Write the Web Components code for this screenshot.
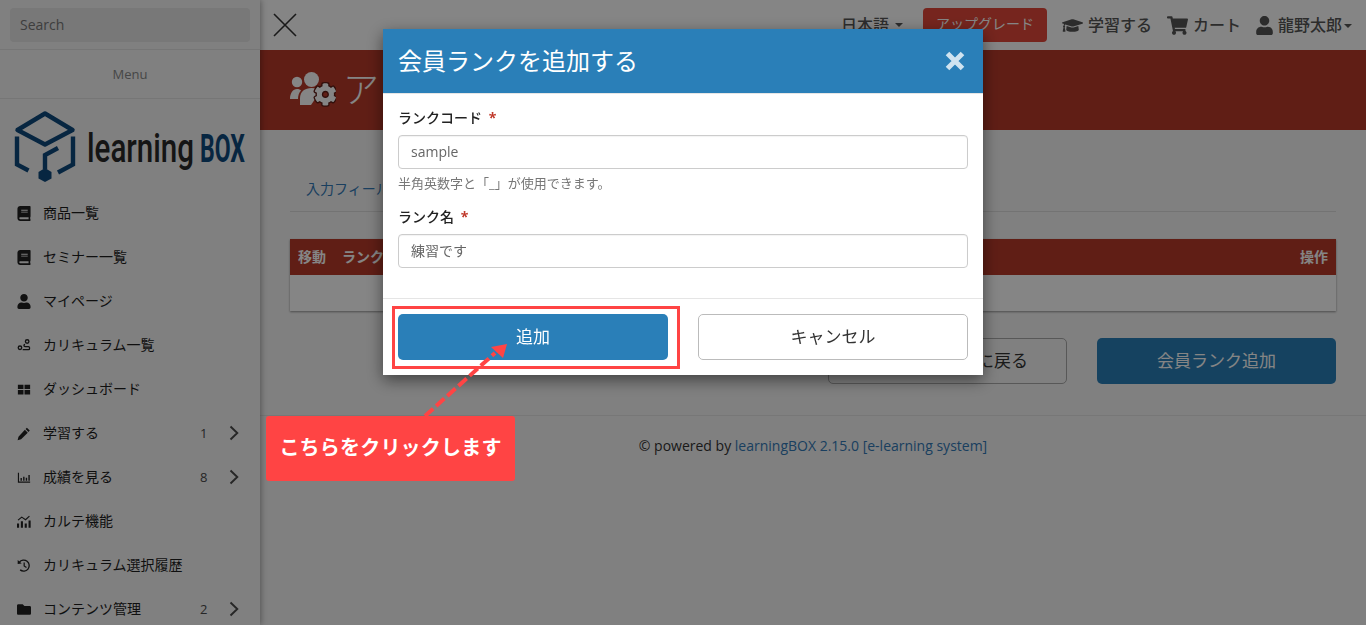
<!DOCTYPE html>
<html lang="ja">
<head>
<meta charset="utf-8">
<title>learningBOX</title>
<style>
  html, body { margin: 0; height: 625px; overflow: hidden; }
  body {
    font: 14px/1.43 "Open Sans", "Noto Sans CJK JP", sans-serif;
    color: #333;
    background: #f5f5f5;
  }
</style>
</head>
<body>

<svg width="0" height="0" style="position:absolute">
  <defs>
    <symbol id="i-book" viewBox="0 0 448 512"><path d="M448 360V24c0-13.3-10.7-24-24-24H96C43 0 0 43 0 96v320c0 53 43 96 96 96h328c13.3 0 24-10.7 24-24v-16c0-7.5-3.5-14.3-8.9-18.7-4.2-15.4-4.2-59.3 0-74.7 5.4-4.3 8.9-11.1 8.9-18.6zM128 134c0-3.3 2.7-6 6-6h212c3.3 0 6 2.7 6 6v20c0 3.3-2.7 6-6 6H134c-3.3 0-6-2.7-6-6v-20zm0 64c0-3.3 2.7-6 6-6h212c3.3 0 6 2.7 6 6v20c0 3.3-2.7 6-6 6H134c-3.3 0-6-2.7-6-6v-20zm253.4 250H96c-17.7 0-32-14.3-32-32 0-17.6 14.4-32 32-32h285.4c-1.9 17.1-1.9 46.9 0 64z"/></symbol>
  </defs>
</svg>

<lb-app></lb-app>

<script>
// shared icon paths, 'vb' is the viewBox
const ICONS = {
  book: { vb: '0 0 448 512', d: 'M448 360V24c0-13.3-10.7-24-24-24H96C43 0 0 43 0 96v320c0 53 43 96 96 96h328c13.3 0 24-10.7 24-24v-16c0-7.5-3.5-14.3-8.9-18.7-4.2-15.4-4.2-59.3 0-74.7 5.4-4.3 8.9-11.1 8.9-18.6zM128 134c0-3.3 2.7-6 6-6h212c3.3 0 6 2.7 6 6v20c0 3.3-2.7 6-6 6H134c-3.3 0-6-2.7-6-6v-20zm0 64c0-3.3 2.7-6 6-6h212c3.3 0 6 2.7 6 6v20c0 3.3-2.7 6-6 6H134c-3.3 0-6-2.7-6-6v-20zm253.4 250H96c-17.7 0-32-14.3-32-32 0-17.6 14.4-32 32-32h285.4c-1.9 17.1-1.9 46.9 0 64z' },
  user: { vb: '0 0 448 512', d: 'M224 256c70.7 0 128-57.3 128-128S294.7 0 224 0 96 57.3 96 128s57.3 128 128 128zm89.6 32h-16.7c-22.2 10.2-46.9 16-72.9 16s-50.6-5.8-72.9-16h-16.7C60.2 288 0 348.2 0 422.4V464c0 26.5 21.5 48 48 48h352c26.5 0 48-21.5 48-48v-41.6c0-74.2-60.2-134.4-134.4-134.4z' },
  folder: { vb: '0 0 512 512', d: 'M464 128H272l-64-64H48C21.49 64 0 85.49 0 112v288c0 26.51 21.49 48 48 48h416c26.51 0 48-21.51 48-48V176c0-26.51-21.49-48-48-48z' },
  grid: { vb: '0 0 16 16', d: 'M1 2.5h6.4v5H1zM8.6 2.5H15v5H8.6zM1 8.7h6.4v5H1zM8.6 8.7H15v5H8.6z' },
  pencil: { vb: '0 0 16 16', d: 'M11.3 1.4l3.3 3.3-1.5 1.5-3.3-3.3zM9 3.7L12.3 7l-7.6 7.6-4 1 1-4z' },
  chart: { vb: '0 0 16 16', d: 'M1 2.5h1.3v10.2H15V14H1zM4 8.5h1.6v3.2H4zM7 7h1.6v4.7H7zM10 8.3h1.6v3.4H10zM13 5h1.6v6.7H13z' },
  route: { vb: '0 0 16 16', html: '<circle cx="3.4" cy="10.6" r="2" fill="none" stroke="currentColor" stroke-width="1.5"/><circle cx="11.6" cy="3.4" r="2" fill="none" stroke="currentColor" stroke-width="1.5"/><path d="M6.5 12.8h6.6c1.7 0 1.7-3.6 0-3.6H9.2c-1.7 0-1.7-2.2 0-2.4" fill="none" stroke="currentColor" stroke-width="1.5"/>' },
  analytics: { vb: '0 0 16 16', html: '<path d="M0 10.4h2.4V15H0zM4.4 7.8h2.4V15H4.4zM8.8 10.2h2.4V15H8.8zM13.2 6.8h2.4V15h-2.4z"/><path d="M1.2 6.5L5.4 3l4.4 3L14.2 1.8" fill="none" stroke="currentColor" stroke-width="1.3"/>' },
  history: { vb: '0 0 16 16', html: '<path d="M2.6 4.4A6.3 6.3 0 1 1 3.6 13" fill="none" stroke="currentColor" stroke-width="1.5"/><path d="M.8 1.8l4.6 4-4.6.6z"/><path d="M8.2 4.6v4l2.6 1.6" fill="none" stroke="currentColor" stroke-width="1.4"/>' },
  cart: { vb: '0 0 576 512', d: 'M528.12 301.319l47.273-208C578.806 78.301 567.391 64 551.99 64H159.208l-9.166-44.81C147.758 8.021 137.93 0 126.529 0H24C10.745 0 0 10.745 0 24v16c0 13.255 10.745 24 24 24h69.883l70.248 343.435C147.325 417.1 136 435.222 136 456c0 30.928 25.072 56 56 56s56-25.072 56-56c0-15.674-6.447-29.835-16.824-40h209.647C430.447 426.165 424 440.326 424 456c0 30.928 25.072 56 56 56s56-25.072 56-56c0-22.172-12.888-41.332-31.579-50.405l5.517-24.276c3.413-15.018-8.002-29.319-23.403-29.319H218.117l-6.545-32h293.145c11.206 0 20.92-7.754 23.403-18.681z' },
  cap: { vb: '0 0 640 512', d: 'M622.34 153.2L343.4 67.5c-15.2-4.67-31.6-4.67-46.79 0L17.66 153.2c-23.54 7.23-23.54 38.36 0 45.59l48.63 14.94c-10.67 13.19-17.23 29.28-17.88 46.9C38.78 266.15 32 276.11 32 288c0 10.78 5.68 19.85 13.86 25.65L20.33 428.53C18.11 438.52 25.71 448 35.94 448h56.11c10.24 0 17.84-9.48 15.62-19.47L82.14 313.65C90.32 307.85 96 298.78 96 288c0-11.57-6.47-21.25-15.66-26.87.76-15.02 8.44-28.3 20.69-36.72L296.6 285.5c9.06 2.78 26.44 6.25 46.79 0l278.95-85.7c23.55-7.24 23.55-38.36 0-45.6zM352.79 315.09c-28.53 8.76-52.84 3.92-65.59 0l-145.02-44.55L128 384c0 35.35 85.96 64 192 64s192-28.65 192-64l-14.18-113.47-145.03 44.56z' },
};

function icon(name, w, h) {
  const ic = ICONS[name];
  const inner = ic.html || `<path d="${ic.d}"/>`;
  return `<svg width="${w}" height="${h}" viewBox="${ic.vb}" fill="currentColor" aria-hidden="true">${inner}</svg>`;
}

class SideItem extends HTMLElement {
  connectedCallback() {
    const badge = this.getAttribute('badge');
    this.attachShadow({ mode: 'open' }).innerHTML = `
      <style>
        :host { display: flex; align-items: center; height: 44px; padding-left: 17px; padding-right: 21px; color: #222; }
        .ic { width: 14px; height: 16px; margin-right: 12px; display: flex; align-items: center; justify-content: center; flex: none; }
        .label { flex: 1; font-size: 14px; white-space: nowrap; color: #1e1e1e; }
        .badge { font-size: 13px; color: #4a4a4a; width: 29px; }
        .chev { display: block; }
      </style>
      <span class="ic">${icon(this.getAttribute('icon'), 15, 15)}</span>
      <span class="label"><slot></slot></span>
      ${badge ? `<span class="badge">${badge}</span>
        <svg class="chev" width="10" height="16" viewBox="0 0 10 16"><path d="M1.5 1.5L8.3 8l-6.8 6.5" fill="none" stroke="#4a4a4a" stroke-width="1.9"/></svg>` : ''}
    `;
  }
}
customElements.define('side-item', SideItem);

class LbLogo extends HTMLElement {
  constructor() {
    super();
    this.attachShadow({ mode: 'open' }).innerHTML = `
      <style>:host { display: block; height: 92px; } svg { display: block; }</style>
      <svg width="260" height="92" viewBox="0 0 260 92">
        <g fill="none" stroke="#0f4a7d" stroke-width="4.4" stroke-linejoin="miter">
          <path d="M45 14.5L72.5 31 45 45.5 17.5 31z" stroke-linejoin="round"/>
          <path d="M17 37.5v28l11.5 6"/>
          <path d="M73 37.5v28L58 73.5"/>
          <path d="M58 49L45 56v14"/>
        </g>
        <path d="M45 69l6.5 4v6.5L45 83l-6.5-3.500V73z" fill="#0f4a7d"/>
        <text x="87" y="63" font-family="Roboto, sans-serif" font-weight="500" font-size="40" fill="#2a2a2a" textLength="107" lengthAdjust="spacingAndGlyphs">learning</text>
        <text x="200" y="63" font-family="Roboto, sans-serif" font-weight="700" font-size="38" fill="#0f4a7d" textLength="45" lengthAdjust="spacingAndGlyphs">BOX</text>
      </svg>`;
  }
}
customElements.define('lb-logo', LbLogo);

class LbSidebar extends HTMLElement {
  constructor() {
    super();
    this.attachShadow({ mode: 'open' }).innerHTML = `
      <style>
        :host { display: block; width: 260px; flex: none; height: 625px; overflow: hidden; position: relative; z-index: 2;
                background: #f5f5f5; box-shadow: 1px 0 6px rgba(0,0,0,.35); }
        .search { height: 50px; box-sizing: border-box; padding: 8px 10px; border-bottom: 1px solid #e2e2e2; }
        .search div { height: 34px; background: #e6e6e6; border-radius: 4px; padding: 0 10px; line-height: 34px; font-size: 14px; color: #777; }
        .menu { height: 49px; box-sizing: border-box; border-bottom: 1px solid #e2e2e2; text-align: center; line-height: 48px; font-size: 13px; color: #888; }
      </style>
      <div class="search"><div>Search</div></div>
      <div class="menu">Menu</div>
      <lb-logo></lb-logo>
      <side-item icon="book">商品一覧</side-item>
      <side-item icon="book">セミナー一覧</side-item>
      <side-item icon="user">マイページ</side-item>
      <side-item icon="route">カリキュラム一覧</side-item>
      <side-item icon="grid">ダッシュボード</side-item>
      <side-item icon="pencil" badge="1">学習する</side-item>
      <side-item icon="chart" badge="8">成績を見る</side-item>
      <side-item icon="analytics">カルテ機能</side-item>
      <side-item icon="history">カリキュラム選択履歴</side-item>
      <side-item icon="folder" badge="2">コンテンツ管理</side-item>
    `;
  }
}
customElements.define('lb-sidebar', LbSidebar);

class LbTopbar extends HTMLElement {
  constructor() {
    super();
    this.attachShadow({ mode: 'open' }).innerHTML = `
      <style>
        :host { display: flex; align-items: center; height: 50px; background: #fff; padding: 0 14px 0 13px; color: #555; font-size: 16px; font-weight: 500; }
        .burger { margin-right: auto; display: block; }
        .nav { display: flex; align-items: center; white-space: nowrap; }
        .caret { width: 0; height: 0; border: 4px solid transparent; border-top-color: #555; border-bottom: 0; display: inline-block; }
        .lang { margin-right: 20px; display: flex; align-items: center; gap: 6px; }
        .up { height: 34px; width: 124px; box-sizing: border-box; border-radius: 4px; background: #e2483a; color: #fff; font-size: 14px; font-weight: 400; text-align: center; line-height: 32px; margin-right: 15px; }
        .nav svg { display: block; margin-right: 5px; }
        .lnk { display: flex; align-items: center; margin-right: 15px; }
        .me { display: flex; align-items: center; }
        .me .caret { margin-left: 2px; margin-top: 2px; }
      </style>
      <svg class="burger" width="24" height="24" viewBox="0 0 24 24"><path d="M1 1l22 22M23 1L1 23" stroke="#333" stroke-width="1.6" fill="none"/></svg>
      <div class="nav">
        <span class="lang">日本語 <span class="caret"></span></span>
        <span class="up">アップグレード</span>
        <span class="lnk">${icon('cap', 21, 17)}学習する</span>
        <span class="lnk">${icon('cart', 21, 19)}カート</span>
        <span class="me">${icon('user', 17, 19)}龍野太郎<span class="caret"></span></span>
      </div>
    `;
  }
}
customElements.define('lb-topbar', LbTopbar);

class LbPage extends HTMLElement {
  constructor() {
    super();
    this.attachShadow({ mode: 'open' }).innerHTML = `
      <style>
        :host { display: block; flex: 1; min-width: 0; background: #f5f5f5; }
        .band { height: 80px; background: #b83a2a; color: #fff; display: flex; align-items: center; padding-left: 29px; font-size: 36px; font-weight: 300; }
        .band svg { margin-right: 7px; display: block; }
        .body { padding: 0 30px; }
        .tabs { margin-top: 36px; height: 45px; box-sizing: content-box; border-bottom: 1px solid #ddd; padding-left: 16px; line-height: 46px; font-size: 14px; color: #337ab7; }
        .table { margin-top: 27px; box-shadow: 0 1px 2px rgba(0,0,0,.4); background: #fff; }
        .head { height: 36px; background: #b83a2a; color: #fff; display: flex; align-items: center; padding: 0 8px; font-size: 14px; font-weight: 700; }
        .head span + span { margin-left: 16px; }
        .head .ops { margin-left: auto; }
        .row { height: 36px; }
        .actions { margin-top: 27px; display: flex; justify-content: flex-end; gap: 30px; }
        .btn { width: 239px; height: 46px; box-sizing: border-box; border-radius: 5px; font-size: 17px; display: flex; align-items: center; justify-content: center; }
        .back { background: #f5f5f5; border: 1px solid #aaa; justify-content: flex-end; padding-right: 38px; color: #333; }
        .add { background: #2a7fb8; color: #fff; }
        .foot { margin-top: 31px; border-top: 1px solid #e4e4e4; text-align: center; padding-top: 20px; font-size: 14px; color: #333; }
        .foot a { color: #337ab7; text-decoration: none; }
      </style>
      <lb-topbar></lb-topbar>
      <div class="band">
        <svg width="47" height="36" viewBox="0 0 47 36" fill="#fff">
          <circle cx="8" cy="10" r="5.200"/>
          <path d="M1 27c0-6 3-10 7-10 2 0 3 .5 4 1.500-2 2-3 5-3 8.500z"/>
          <circle cx="22.500" cy="7.500" r="7.500"/>
          <path d="M11 33v-7c0-6.500 5-10 11.500-10 4 0 7 1 9 3L22 33z"/>
          <g transform="translate(25 11) scale(.0445)"><path stroke="#5f1d15" stroke-width="60" paint-order="stroke" d="M487.4 315.7l-42.6-24.6c4.3-23.2 4.3-47 0-70.200l42.6-24.600c4.900-2.800 7.100-8.600 5.500-14-11.100-35.600-30-67.800-54.700-94.600-3.800-4.100-10-5.100-14.800-2.300L380.800 110c-17.900-15.400-38.500-27.300-60.800-35.100V25.800c0-5.600-3.900-10.500-9.400-11.700-36.700-8.200-74.300-7.800-109.200 0-5.500 1.200-9.400 6.100-9.400 11.700V75c-22.200 7.900-42.800 19.800-60.800 35.100L88.700 85.500c-4.900-2.800-11-1.900-14.800 2.300-24.700 26.700-43.600 58.900-54.700 94.600-1.700 5.400.6 11.200 5.500 14L67.300 221c-4.300 23.200-4.300 47 0 70.200l-42.600 24.600c-4.900 2.800-7.100 8.600-5.500 14 11.100 35.600 30 67.800 54.700 94.600 3.800 4.100 10 5.100 14.800 2.300l42.600-24.600c17.900 15.400 38.500 27.300 60.800 35.100v49.200c0 5.600 3.900 10.500 9.400 11.700 36.700 8.200 74.300 7.800 109.200 0 5.500-1.200 9.400-6.100 9.400-11.700v-49.200c22.200-7.900 42.800-19.800 60.800-35.100l42.600 24.600c4.900 2.800 11 1.900 14.800-2.300 24.700-26.700 43.600-58.900 54.700-94.600 1.500-5.500-.7-11.300-5.600-14.100zM256 336c-44.100 0-80-35.900-80-80s35.900-80 80-80 80 35.900 80 80-35.900 80-80 80z"/></g>
        </svg>
        <span>アカ</span>
      </div>
      <div class="body">
        <div class="tabs">入力フィールド</div>
        <div class="table">
          <div class="head"><span>移動</span><span>ランク</span><span class="ops">操作</span></div>
          <div class="row"></div>
        </div>
        <div class="actions">
          <div class="btn back">に戻る</div>
          <div class="btn add">会員ランク追加</div>
        </div>
      </div>
      <div class="foot">© powered by <a>learningBOX 2.15.0 [e-learning system]</a></div>
    `;
  }
}
customElements.define('lb-page', LbPage);

class FormField extends HTMLElement {
  connectedCallback() {
    const help = this.getAttribute('help');
    this.attachShadow({ mode: 'open' }).innerHTML = `
      <style>
        :host { display: block; }
        label { display: block; font-size: 14px; font-weight: 500; color: #222; line-height: 20px; margin-bottom: 7px; }
        label b { color: #c0392b; font-weight: 700; margin-left: 3px; }
        .input { height: 34px; box-sizing: border-box; border: 1px solid #ccc; border-radius: 4px; padding: 0 12px; line-height: 32px; font-size: 14px; color: #666; box-shadow: inset 0 1px 1px rgba(0,0,0,.05); }
        .help { font-size: 13px; color: #777; line-height: 20px; margin-top: 4px; }
      </style>
      <label>${this.getAttribute('label')} <b>*</b></label>
      <div class="input"><slot></slot></div>
      ${help ? `<div class="help">${help}</div>` : ''}
    `;
  }
}
customElements.define('form-field', FormField);

class RankModal extends HTMLElement {
  constructor() {
    super();
    this.attachShadow({ mode: 'open' }).innerHTML = `
      <style>
        :host { display: block; width: 600px; background: #fff; margin-top: 29px; align-self: flex-start; box-shadow: 0 5px 15px rgba(0,0,0,.5); }
        header { height: 65px; background: #2a7fb8; color: #fff; display: flex; align-items: center; justify-content: space-between; padding: 0 17px 0 15px; font-size: 24px; border-bottom: 1px solid #e5e5e5; box-sizing: border-box; }
        header svg { display: block; }
        .body { height: 204px; box-sizing: border-box; padding: 14px 15px 0; }
        form-field + form-field { margin-top: 14px; }
        footer { height: 77px; box-sizing: border-box; border-top: 1px solid #e5e5e5; padding: 15px; display: grid; grid-template-columns: 270px 270px; justify-content: space-between; align-items: start; }
        .btn { height: 46px; box-sizing: border-box; border-radius: 5px; font-size: 17px; display: flex; align-items: center; justify-content: center; }
        .ok { background: #2a7fb8; color: #fff; }
        .cancel { border: 1px solid #bbb; color: #333; }
      </style>
      <header>
        <span>会員ランクを追加する</span>
        <svg width="22" height="22" viewBox="0 0 22 22"><path d="M3.500 3.500l15 15M18.500 3.500l-15 15" stroke="#cfe3f0" stroke-width="5" fill="none"/></svg>
      </header>
      <div class="body">
        <form-field label="ランクコード" help="半角英数字と「_」が使用できます。">sample</form-field>
        <form-field label="ランク名">練習です</form-field>
      </div>
      <footer>
        <div class="btn ok">追加</div>
        <div class="btn cancel">キャンセル</div>
      </footer>
    `;
  }
}
customElements.define('rank-modal', RankModal);

// tutorial annotation drawn over the modal
class ClickCallout extends HTMLElement {
  constructor() {
    super();
    this.attachShadow({ mode: 'open' }).innerHTML = `
      <style>
        :host { position: fixed; inset: 0; display: block; pointer-events: none; z-index: 20; }
        .frame { position: absolute; left: 392px; top: 306px; width: 288px; height: 63px; box-sizing: border-box; border: 3px solid #ff4444; }
        .note { position: absolute; left: 266px; top: 416px; width: 249px; height: 65px; border-radius: 3px; background: #ff4444; color: #fff; font-size: 20px; font-weight: 700; display: flex; align-items: center; justify-content: center; letter-spacing: .2px; white-space: nowrap; }
        svg { position: absolute; left: 0; top: 0; }
      </style>
      <svg width="1366" height="625">
        <path d="M425 416L495 353" stroke="#ff4444" stroke-width="4" stroke-dasharray="11 4" fill="none"/>
        <path d="M507 344L503 358 491 347z" fill="#ff4444"/>
      </svg>
      <div class="frame"></div>
      <div class="note">こちらをクリックします</div>
    `;
  }
}
customElements.define('click-callout', ClickCallout);

class LbApp extends HTMLElement {
  constructor() {
    super();
    this.attachShadow({ mode: 'open' }).innerHTML = `
      <style>
        :host { display: flex; height: 625px; overflow: hidden; }
        .backdrop { position: fixed; inset: 0; z-index: 10; background: rgba(0,0,0,.48); display: flex; justify-content: center; }
      </style>
      <lb-sidebar></lb-sidebar>
      <lb-page></lb-page>
      <div class="backdrop"><rank-modal></rank-modal></div>
      <click-callout></click-callout>
    `;
  }
}
customElements.define('lb-app', LbApp);
</script>
</body>
</html>
